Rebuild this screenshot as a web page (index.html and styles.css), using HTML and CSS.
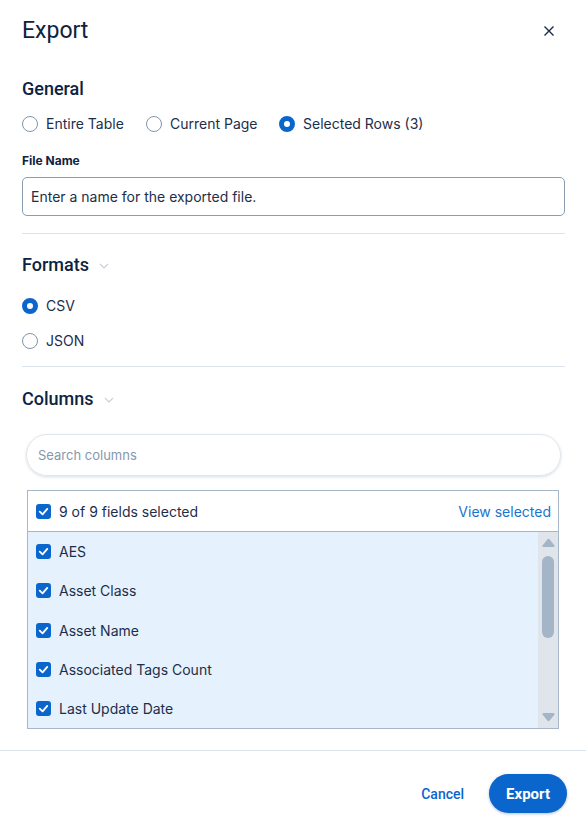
FILE: index.html
```html
<!DOCTYPE html>
<html>
<head>
<meta charset="utf-8">
<link rel="stylesheet" href="styles.css">
</head>
<body>
<div class="dialog">
  <div class="header">
    <h1 class="title">Export</h1>
    <svg class="close" width="12" height="12" viewBox="0 0 12 12"><path d="M1.5 1.5 L10.5 10.5 M10.5 1.5 L1.5 10.5" stroke="#1a2b45" stroke-width="1.4" fill="none"/></svg>
  </div>
  <div class="section general">
    <h2 class="sec-title">General</h2>
    <div class="radio-row">
      <label class="radio"><span class="circle"></span>Entire Table</label>
      <label class="radio"><span class="circle"></span>Current Page</label>
      <label class="radio"><span class="circle on"></span>Selected Rows (3)</label>
    </div>
    <div class="field-label">File Name</div>
    <div class="input">Enter a name for the exported file.</div>
  </div>
  <div class="divider"></div>
  <div class="section formats">
    <h2 class="sec-title">Formats <svg class="chev" width="10" height="6" viewBox="0 0 10 6"><path d="M1 1 L5 5 L9 1" stroke="#c5d0dc" stroke-width="1.1" fill="none"/></svg></h2>
    <div class="radio-col">
      <label class="radio"><span class="circle on"></span>CSV</label>
      <label class="radio"><span class="circle"></span>JSON</label>
    </div>
  </div>
  <div class="divider"></div>
  <div class="section columns">
    <h2 class="sec-title">Columns <svg class="chev" width="10" height="6" viewBox="0 0 10 6"><path d="M1 1 L5 5 L9 1" stroke="#c5d0dc" stroke-width="1.1" fill="none"/></svg></h2>
    <div class="search">Search columns</div>
    <div class="list">
      <div class="list-head">
        <label class="check"><span class="box"><svg width="16" height="16" viewBox="0 0 16 16"><path d="M4 8.2 L7 11 L12 5.2" stroke="#fff" stroke-width="2" fill="none" stroke-linecap="round" stroke-linejoin="round"/></svg></span>9 of 9 fields selected</label>
        <span class="view">View selected</span>
      </div>
      <div class="list-body">
        <div class="items">
          <label class="check item"><span class="box"><svg width="16" height="16" viewBox="0 0 16 16"><path d="M4 8.2 L7 11 L12 5.2" stroke="#fff" stroke-width="2" fill="none" stroke-linecap="round" stroke-linejoin="round"/></svg></span>AES</label>
          <label class="check item"><span class="box"><svg width="16" height="16" viewBox="0 0 16 16"><path d="M4 8.2 L7 11 L12 5.2" stroke="#fff" stroke-width="2" fill="none" stroke-linecap="round" stroke-linejoin="round"/></svg></span>Asset Class</label>
          <label class="check item"><span class="box"><svg width="16" height="16" viewBox="0 0 16 16"><path d="M4 8.2 L7 11 L12 5.2" stroke="#fff" stroke-width="2" fill="none" stroke-linecap="round" stroke-linejoin="round"/></svg></span>Asset Name</label>
          <label class="check item"><span class="box"><svg width="16" height="16" viewBox="0 0 16 16"><path d="M4 8.2 L7 11 L12 5.2" stroke="#fff" stroke-width="2" fill="none" stroke-linecap="round" stroke-linejoin="round"/></svg></span>Associated Tags Count</label>
          <label class="check item"><span class="box"><svg width="16" height="16" viewBox="0 0 16 16"><path d="M4 8.2 L7 11 L12 5.2" stroke="#fff" stroke-width="2" fill="none" stroke-linecap="round" stroke-linejoin="round"/></svg></span>Last Update Date</label>
        </div>
        <div class="scrollbar">
          <svg width="13" height="9" viewBox="0 0 13 9"><path d="M5.3 1.4 Q6.5 0 7.7 1.4 L12.5 7.5 Q13 9 11.5 9 L1.5 9 Q0 9 0.5 7.5 Z" fill="#a3b5c7"/></svg>
          <div class="thumb"></div>
          <div class="spacer"></div>
          <svg width="13" height="9" viewBox="0 0 13 9"><path d="M5.3 7.6 Q6.5 9 7.7 7.6 L12.5 1.5 Q13 0 11.5 0 L1.5 0 Q0 0 0.5 1.5 Z" fill="#a3b5c7"/></svg>
        </div>
      </div>
    </div>
  </div>
  <div class="footer">
    <span class="cancel">Cancel</span>
    <span class="export">Export</span>
  </div>
</div>
</body>
</html>
```
FILE: styles.css
```css
* { box-sizing: border-box; }
html, body { margin: 0; padding: 0; background: #fff; }
body { font-family: Inter, "Noto Sans", sans-serif; color: #0f2542; width: 586px; height: 834px; overflow: hidden; }
.dialog { display: flex; flex-direction: column; height: 834px; }
.header { display: flex; justify-content: space-between; padding: 18px 31px 0 22px; height: 62px; align-items: flex-start; }
.title { font-family: Roboto, sans-serif; font-weight: 400; font-size: 23px; margin: 0; line-height: 26px; color: #0d2340; }
.close { margin-top: 7px; }
.section { padding: 0 21px 0 22px; }
.sec-title { font-family: Roboto, sans-serif; font-weight: 500; font-size: 18px; line-height: 22px; margin: 0; color: #0d2340; display: flex; align-items: center; }
.chev { margin-left: 10px; margin-top: 2px; }
.general .sec-title { margin-top: 16px; }
.radio-row { display: flex; gap: 0; margin-top: 15px; height: 18px; align-items: center; }
.radio { display: flex; align-items: center; font-size: 14px; color: #1d2e4a; line-height: 18px; }
.radio-row .radio:nth-child(1) { width: 124px; }
.radio-row .radio:nth-child(2) { width: 133px; }
.circle { width: 16px; height: 16px; border-radius: 50%; border: 1px solid #8095ab; margin-right: 8px; flex: none; background: #fff; }
.circle.on { border: 5px solid #0a66cc; }
.field-label { font-size: 12px; font-weight: 700; margin-top: 21px; line-height: 14px; color: #0d2340; }
.input { margin-top: 9px; height: 39px; border: 1px solid #8a9cb1; border-radius: 5px; font-size: 14px; display: flex; align-items: center; padding-left: 8px; color: #1d2e4a; }
.divider { height: 1px; background: #dbe4ed; margin: 17px 21px 0 22px; }
.formats .sec-title { margin-top: 20px; }
.radio-col { display: flex; flex-direction: column; gap: 17px; margin-top: 21px; }
.formats + .divider { margin-top: 16px; }
.columns .sec-title { margin-top: 21px; }
.search { margin: 24px 4px 0 4px; height: 42px; border-radius: 21px; border: 1px solid #e1e6ec; box-shadow: 0 1px 3px rgba(40,60,90,0.18); font-size: 13px; color: #8698ad; display: flex; align-items: center; padding-left: 11px; }
.list { margin: 14px 6px 0 5px; border: 1px solid #a7b7c8; }
.list-head { height: 41px; display: flex; align-items: center; justify-content: space-between; padding: 0 7px 0 8px; border-bottom: 1px solid #a7b7c8; background: #fff; }
.check { display: flex; align-items: center; font-size: 14px; color: #1d2e4a; }
.box { width: 15px; height: 15px; border-radius: 3px; background: #0a66cc; margin-right: 8px; display: flex; align-items: center; justify-content: center; flex: none; }
.box svg { width: 15px; height: 15px; }
.view { color: #1a74d2; font-size: 14px; }
.list-body { display: flex; background: #e5f1fd; height: 196px; }
.items { flex: 1; padding: 0 8px; display: flex; flex-direction: column; }
.item { height: 39.5px; }
.scrollbar { width: 20px; background: #dfe5eb; display: flex; flex-direction: column; align-items: center; padding: 6px 0 6px; }
.thumb { width: 12px; height: 82px; border-radius: 6px; background: #a3b5c7; margin-top: 9px; }
.spacer { flex: 1; }
.footer { margin-top: 21px; border-top: 1px solid #dbe4ed; display: flex; justify-content: flex-end; align-items: center; padding: 23px 19px 0 0; gap: 25px; }
.cancel { font-family: Roboto, sans-serif; font-weight: 500; font-size: 14px; color: #0a66cc; }
.export { font-family: Roboto, sans-serif; font-weight: 700; font-size: 15px; color: #fff; background: #0a66cc; height: 39px; padding: 0 17px; border-radius: 20px; display: flex; align-items: center; box-shadow: 0 1px 3px rgba(0,50,120,0.3); }
```
